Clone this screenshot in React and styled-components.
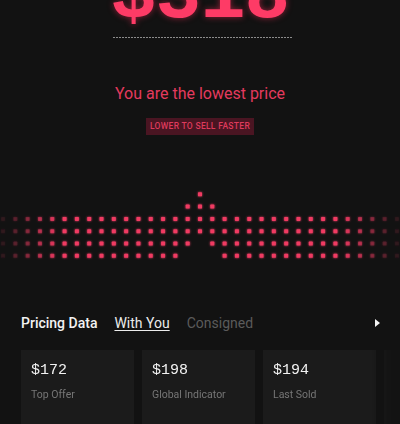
import React from "react";
import styled, { createGlobalStyle } from "styled-components";

const GlobalStyle = createGlobalStyle`
  html, body {
    margin: 0;
    padding: 0;
    background: #121212;
    overflow: hidden;
  }
  body {
    font-family: Roboto, "Liberation Sans", sans-serif;
    -webkit-font-smoothing: antialiased;
  }
`;

const Page = styled.div`
  width: 400px;
  height: 424px;
  overflow: hidden;
  background: #121212;
  display: flex;
  flex-direction: column;
  align-items: center;
`;

const Price = styled.div`
  margin-top: -41px;
  font-family: "Liberation Mono", "DejaVu Sans Mono", monospace;
  font-weight: 700;
  font-size: 76px;
  line-height: 1;
  color: #fe3b66;
  text-shadow: 0 0 6px rgba(255, 45, 90, 0.55);
  letter-spacing: -1px;
`;

const Dashed = styled.div`
  width: 180px;
  height: 1px;
  margin-top: 2px;
  margin-left: 6px;
  background: repeating-linear-gradient(90deg, #8c8c8c 0 2px, transparent 2px 3px);
`;

const Status = styled.div`
  margin-top: 46px;
  font-size: 16px;
  line-height: 20px;
  color: #e43a5e;
`;

const Badge = styled.div`
  margin-top: 14px;
  height: 17px;
  line-height: 17px;
  padding: 0 4px;
  background: #4a1522;
  color: #df3a5c;
  font-size: 8.5px;
  font-weight: 500;
  letter-spacing: 0.3px;
  text-transform: uppercase;
`;

const Chart = styled.svg`
  display: block;
  margin-top: 51px;
  width: 400px;
  height: 80px;
  flex-shrink: 0;
`;

const TabsRow = styled.div`
  align-self: stretch;
  margin-top: 49px;
  height: 20px;
  padding: 0 21px;
  display: flex;
  align-items: center;
  gap: 17px;
`;

const TabTitle = styled.span`
  font-size: 14px;
  font-weight: 500;
  color: #f2f2f2;
`;

const Tab = styled.span`
  font-size: 14px;
  color: ${(p) => (p.$active ? "#ececec" : "#5b5b5b")};
  text-decoration: ${(p) => (p.$active ? "underline" : "none")};
  text-underline-offset: 2px;
  text-decoration-thickness: 1px;
`;

const Arrow = styled.span`
  margin-left: auto;
  margin-right: -1px;
  width: 0;
  height: 0;
  border-top: 4px solid transparent;
  border-bottom: 4px solid transparent;
  border-left: 5px solid #f4f4f4;
`;

const Cards = styled.div`
  align-self: stretch;
  margin-top: 19px;
  padding-left: 21px;
  display: flex;
  gap: 8px;
  overflow: hidden;
  -webkit-mask-image: linear-gradient(90deg, #000 0, #000 372px, rgba(0, 0, 0, 0.15) 392px);
  mask-image: linear-gradient(90deg, #000 0, #000 372px, rgba(0, 0, 0, 0.15) 392px);
`;

const Card = styled.div`
  flex: 0 0 113px;
  height: 110px;
  box-sizing: border-box;
  padding: 12px 10px;
  background: #1b1b1b;
`;

const CardValue = styled.div`
  font-family: "Liberation Mono", "DejaVu Sans Mono", monospace;
  font-size: 15px;
  line-height: 18px;
  color: #f2f2f2;
`;

const CardLabel = styled.div`
  margin-top: 8px;
  font-size: 10.5px;
  line-height: 14px;
  color: #767676;
  white-space: nowrap;
`;

const stats = [
  { value: "$172", label: "Top Offer" },
  { value: "$198", label: "Global Indicator" },
  { value: "$194", label: "Last Sold" },
  { value: "", label: "" },
];

// which rows each column fills: 0 = peak row, 5 = bottom row
function hasDot(k, r) {
  const a = Math.abs(k);
  if (r === 0) return k === 0;
  if (r === 1) return a <= 1;
  if (r === 2 || r === 3) return true;
  if (r === 4) return k !== 0;
  return a >= 2;
}

const fade = { 12: 0.75, 13: 0.55, 14: 0.35, 15: 0.2, 16: 0.08 };

function DotChart() {
  const dots = [];
  for (let k = -16; k <= 16; k++) {
    for (let r = 0; r < 6; r++) {
      if (!hasDot(k, r)) continue;
      const cx = 200 + k * 12.31;
      const cy = 8.3 + r * 12.31;
      const o = fade[Math.abs(k)] ?? 1;
      dots.push(
        <rect key={k + "_" + r} x={cx - 2} y={cy - 2} width="4" height="4" rx="0.6" fill="#f03a62" opacity={o} />
      );
    }
  }
  return (
    <Chart viewBox="0 0 400 80">
      <defs>
        <filter id="glow" x="-20%" y="-20%" width="140%" height="140%">
          <feGaussianBlur stdDeviation="1.2" result="b" />
          <feMerge>
            <feMergeNode in="b" />
            <feMergeNode in="SourceGraphic" />
          </feMerge>
        </filter>
      </defs>
      <g filter="url(#glow)">{dots}</g>
    </Chart>
  );
}

export default function App() {
  return (
    <>
      <GlobalStyle />
      <Page>
        <Price>$318</Price>
        <Dashed />
        <Status>You are the lowest price</Status>
        <Badge>Lower to sell faster</Badge>
        <DotChart />
        <TabsRow>
          <TabTitle>Pricing Data</TabTitle>
          <Tab $active>With You</Tab>
          <Tab>Consigned</Tab>
          <Arrow />
        </TabsRow>
        <Cards>
          {stats.map((s, i) => (
            <Card key={i}>
              {s.value && <CardValue>{s.value}</CardValue>}
              {s.label && <CardLabel>{s.label}</CardLabel>}
            </Card>
          ))}
        </Cards>
      </Page>
    </>
  );
}
